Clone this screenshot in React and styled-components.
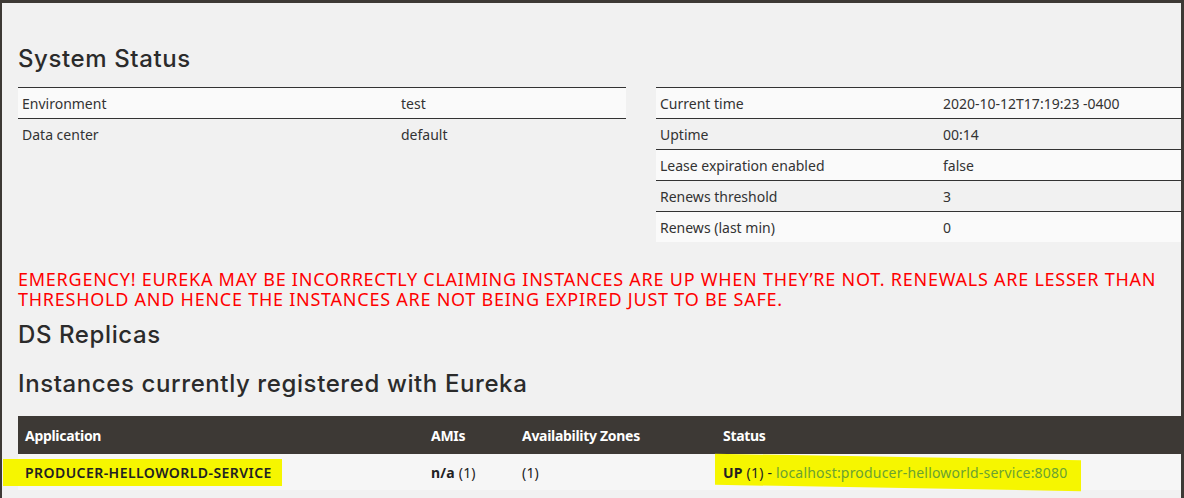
import React from "react";
import styled, { createGlobalStyle } from "styled-components";

const GlobalStyles = createGlobalStyle`
  html, body {
    margin: 0;
    padding: 0;
    background: #f1f1f1;
  }
  body {
    font-family: "Noto Sans", "Open Sans", sans-serif;
    font-size: 14px;
    color: #333;
  }
`;

const Frame = styled.div`
  box-sizing: border-box;
  height: 498px;
  overflow: hidden;
  border-top: 3px solid #3d3935;
  border-left: 2px solid #3d3935;
  border-right: 3px solid #3d3935;
  background: #f1f1f1;
  padding: 0 0 0 16px;
`;

const Heading = styled.h1`
  margin: ${(p) => p.$margin || "0"};
  font-family: Inter, "Noto Sans", sans-serif;
  font-weight: 500;
  font-size: 24px;
  line-height: 30px;
  color: #2b2b2b;
  letter-spacing: 0.6px;
`;

const StatusGrid = styled.div`
  display: grid;
  grid-template-columns: 608px 1fr;
  column-gap: 30px;
  align-items: start;
`;

const InfoTable = styled.table`
  width: 100%;
  border-collapse: collapse;
`;

const InfoRow = styled.tr`
  background: ${(p) => (p.$odd ? "#fafafa" : "#f1f1f1")};
`;

const InfoCell = styled.td`
  height: 30px;
  padding: 0 4px;
  width: ${(p) => p.$w || "auto"};
  vertical-align: middle;
  color: #333;
  border-top: 1.5px solid #333;
`;

const Emergency = styled.h4`
  margin: 27px 0 0;
  color: #ff0000;
  font-family: "Noto Sans", sans-serif;
  font-weight: 400;
  font-size: 18px;
  line-height: 20px;
  text-transform: uppercase;
  letter-spacing: 0.75px;
`;

const AppTable = styled.table`
  width: 100%;
  border-collapse: collapse;
  margin-top: 17px;
`;

const HeadCell = styled.th`
  background: #3d3935;
  color: #fff;
  font-weight: 700;
  text-align: left;
  height: 38px;
  padding: 0 0 0 7px;
  width: ${(p) => p.$w || "auto"};
  font-size: 14px;
  letter-spacing: -0.3px;
`;

const BodyCell = styled.td`
  background: #f6f6f6;
  height: 36px;
  padding: 0 0 0 7px;
  vertical-align: middle;
  color: #222;
  letter-spacing: 0.2px;
`;

const Marker = styled.span`
  position: relative;
  display: inline-block;
  &::before {
    content: "";
    position: absolute;
    left: ${(p) => p.$left}px;
    right: ${(p) => p.$right}px;
    top: ${(p) => p.$top}px;
    bottom: ${(p) => p.$bottom}px;
    background: #f6f600;
    transform: skewY(${(p) => p.$skew || 0}deg);
    z-index: 0;
  }
  & > * {
    position: relative;
    z-index: 1;
  }
`;

const Strong = styled.b`
  font-weight: 700;
`;

const AppName = styled.b`
  font-weight: 600;
  letter-spacing: 0.45px;
`;

const Link = styled.a`
  color: #6aa232;
  text-decoration: none;
`;

const envRows = [
  ["Environment", "test"],
  ["Data center", "default"],
];

const statusRows = [
  ["Current time", "2020-10-12T17:19:23 -0400"],
  ["Uptime", "00:14"],
  ["Lease expiration enabled", "false"],
  ["Renews threshold", "3"],
  ["Renews (last min)", "0"],
];

const KeyValueTable = ({ rows, keyWidth }) => (
  <InfoTable>
    <tbody>
      {rows.map(([k, v], i) => (
        <InfoRow key={k} $odd={i % 2 === 0}>
          <InfoCell $w={keyWidth}>{k}</InfoCell>
          <InfoCell>{v}</InfoCell>
        </InfoRow>
      ))}
    </tbody>
  </InfoTable>
);

export default function App() {
  return (
    <>
      <GlobalStyles />
      <Frame>
        <Heading $margin="41px 0 13px">System Status</Heading>
        <StatusGrid>
          <KeyValueTable rows={envRows} keyWidth="371px" />
          <KeyValueTable rows={statusRows} keyWidth="275px" />
        </StatusGrid>
        <Emergency>
          Emergency! Eureka may be incorrectly claiming instances are up when they’re not. Renewals are
          lesser than threshold and hence the instances are not being expired just to be safe.
        </Emergency>
        <Heading $margin="11px 0 0">DS Replicas</Heading>
        <Heading $margin="19px 0 0">Instances currently registered with Eureka</Heading>
        <AppTable>
          <thead>
            <tr>
              <HeadCell $w="399px">Application</HeadCell>
              <HeadCell $w="84px">AMIs</HeadCell>
              <HeadCell $w="194px">Availability Zones</HeadCell>
              <HeadCell>Status</HeadCell>
            </tr>
          </thead>
          <tbody>
            <tr>
              <BodyCell>
                <Marker $left={-22} $right={-10} $top={-4} $bottom={-4}>
                  <AppName>PRODUCER-HELLOWORLD-SERVICE</AppName>
                </Marker>
              </BodyCell>
              <BodyCell>
                <Strong>n/a</Strong> (1)
              </BodyCell>
              <BodyCell>(1)</BodyCell>
              <BodyCell>
                <Marker $left={-8} $right={-14} $top={-6} $bottom={-6} $skew={1}>
                  <span>
                    <Strong>UP</Strong> (1) - <Link href="#">localhost:producer-helloworld-service:8080</Link>
                  </span>
                </Marker>
              </BodyCell>
            </tr>
          </tbody>
        </AppTable>
      </Frame>
    </>
  );
}
